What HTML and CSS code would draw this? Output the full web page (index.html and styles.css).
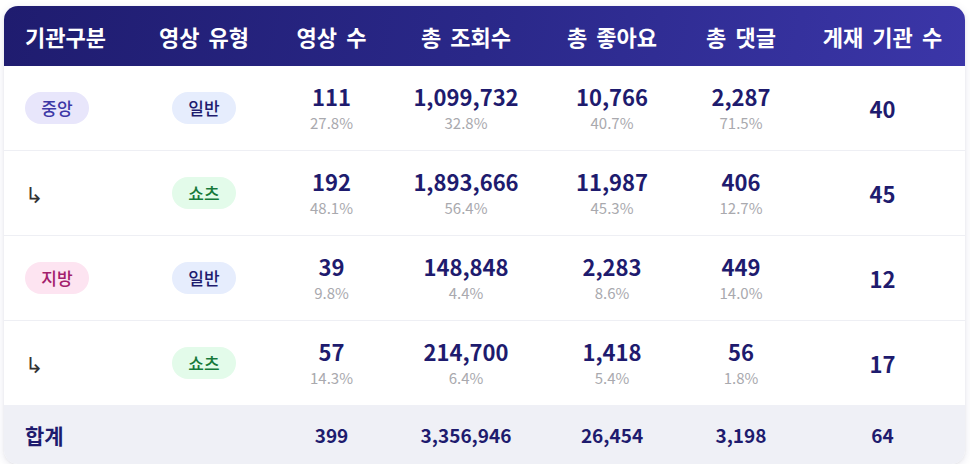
FILE: index.html
```html
<!DOCTYPE html>
<html lang="ko">
<head>
<meta charset="utf-8">
<link rel="stylesheet" href="styles.css">
</head>
<body>
<div class="card">
  <table class="stats">
    <colgroup>
      <col class="c1"><col class="c2"><col class="c3"><col class="c4"><col class="c5"><col class="c6"><col class="c7">
    </colgroup>
    <thead>
      <tr>
        <th class="left">기관구분</th>
        <th>영상 유형</th>
        <th>영상 수</th>
        <th>총 조회수</th>
        <th>총 좋아요</th>
        <th>총 댓글</th>
        <th>게재 기관 수</th>
      </tr>
    </thead>
    <tbody>
      <tr>
        <td class="left"><span class="badge central">중앙</span></td>
        <td><span class="badge normal">일반</span></td>
        <td><div class="num">111</div><div class="pct">27.8%</div></td>
        <td><div class="num">1,099,732</div><div class="pct">32.8%</div></td>
        <td><div class="num">10,766</div><div class="pct">40.7%</div></td>
        <td><div class="num">2,287</div><div class="pct">71.5%</div></td>
        <td><div class="num">40</div></td>
      </tr>
      <tr>
        <td class="left"><span class="sub">↳</span></td>
        <td><span class="badge shorts">쇼츠</span></td>
        <td><div class="num">192</div><div class="pct">48.1%</div></td>
        <td><div class="num">1,893,666</div><div class="pct">56.4%</div></td>
        <td><div class="num">11,987</div><div class="pct">45.3%</div></td>
        <td><div class="num">406</div><div class="pct">12.7%</div></td>
        <td><div class="num">45</div></td>
      </tr>
      <tr>
        <td class="left"><span class="badge local">지방</span></td>
        <td><span class="badge normal">일반</span></td>
        <td><div class="num">39</div><div class="pct">9.8%</div></td>
        <td><div class="num">148,848</div><div class="pct">4.4%</div></td>
        <td><div class="num">2,283</div><div class="pct">8.6%</div></td>
        <td><div class="num">449</div><div class="pct">14.0%</div></td>
        <td><div class="num">12</div></td>
      </tr>
      <tr>
        <td class="left"><span class="sub">↳</span></td>
        <td><span class="badge shorts">쇼츠</span></td>
        <td><div class="num">57</div><div class="pct">14.3%</div></td>
        <td><div class="num">214,700</div><div class="pct">6.4%</div></td>
        <td><div class="num">1,418</div><div class="pct">5.4%</div></td>
        <td><div class="num">56</div><div class="pct">1.8%</div></td>
        <td><div class="num">17</div></td>
      </tr>
    </tbody>
    <tfoot>
      <tr>
        <td class="left total-label">합계</td>
        <td></td>
        <td>399</td>
        <td>3,356,946</td>
        <td>26,454</td>
        <td>3,198</td>
        <td>64</td>
      </tr>
    </tfoot>
  </table>
</div>
</body>
</html>
```

FILE: styles.css
```css
html, body {
  margin: 0;
  padding: 0;
  background: #ffffff;
}
body {
  padding: 6px 5px 0 4px;
  font-family: "Noto Sans CJK KR", "Noto Sans", sans-serif;
}
.card {
  border-radius: 14px;
  overflow: hidden;
  background: #ffffff;
  box-shadow: 0 2px 10px rgba(30, 27, 110, 0.10), 0 1px 3px rgba(0, 0, 0, 0.06);
}
.stats {
  width: 100%;
  border-collapse: collapse;
  table-layout: fixed;
}
.c1 { width: 131px; }
.c2 { width: 138px; }
.c3 { width: 117px; }
.c4 { width: 152px; }
.c5 { width: 140px; }
.c6 { width: 118px; }
.c7 { width: auto; }

thead tr {
  background: linear-gradient(100deg, #1f1c6f 0%, #2a2889 50%, #3b36a8 100%);
}
th {
  height: 60px;
  padding: 0;
  color: #ffffff;
  font-size: 22px;
  font-weight: 700;
  text-align: center;
  word-spacing: 3px;
  white-space: nowrap;
}
th.left, td.left {
  text-align: left;
  padding-left: 21px;
}
tbody td {
  height: 84px;
  padding: 0;
  text-align: center;
  vertical-align: middle;
  border-bottom: 1px solid #eeeff4;
}
tbody tr:last-child td {
  border-bottom: none;
}
.num {
  color: #1e1b6e;
  font-size: 22px;
  font-weight: 700;
  line-height: 28px;
}
.pct {
  margin-top: 2px;
  color: #a9a9ae;
  font-size: 15px;
  line-height: 22px;
}
.badge {
  display: inline-block;
  width: 64px;
  height: 32px;
  line-height: 32px;
  border-radius: 16px;
  text-align: center;
  font-size: 17px;
  font-weight: 500;
}
.central { background: #e8e6fb; color: #3d38a6; }
.normal { background: #e6edfd; color: #1e1b6e; }
.shorts { background: #e3fbea; color: #17793a; }
.local { background: #fde4f1; color: #a3206c; }
.sub {
  display: inline-block;
  color: #333333;
  font-size: 22px;
  font-weight: 500;
  line-height: 28px;
}
tfoot tr {
  background: #eff0f6;
}
tfoot td {
  height: 59px;
  padding: 0;
  text-align: center;
  color: #1e1b6e;
  font-size: 19px;
  font-weight: 700;
}
tfoot td.total-label {
  font-size: 21px;
}
```
